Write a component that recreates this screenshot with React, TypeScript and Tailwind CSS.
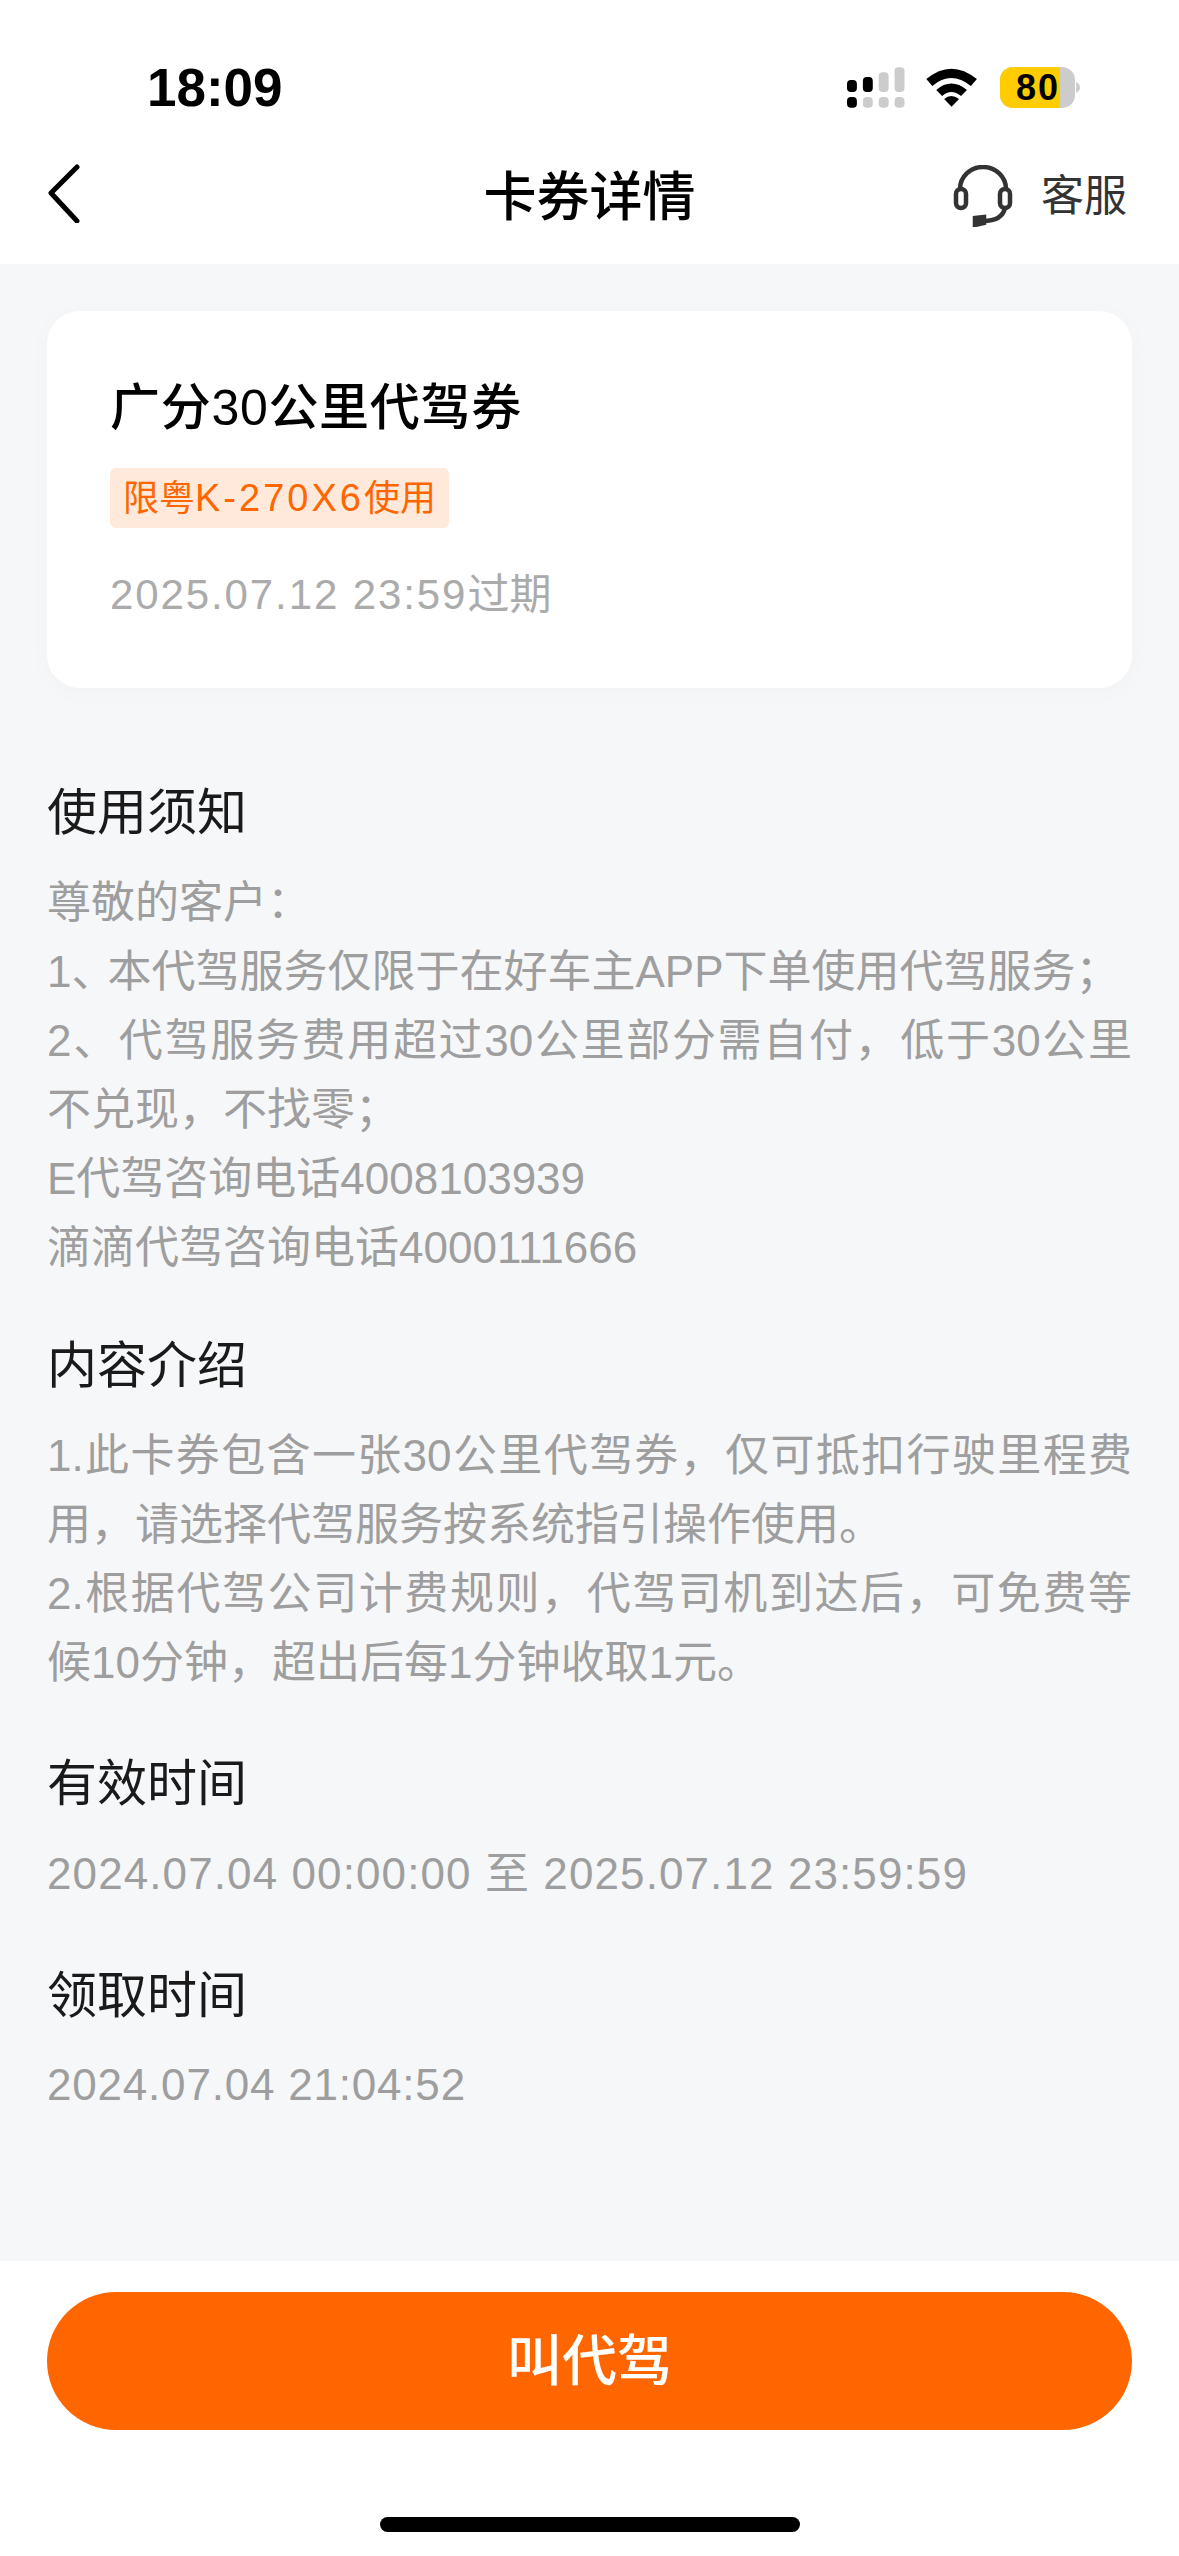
import React from "react";

const font = { fontFamily: '"Liberation Sans", "Noto Sans CJK SC", sans-serif' };

function Section({
  title,
  lines,
  className = "",
  bodyClass = "mt-5",
}: {
  title: string;
  lines: React.ReactNode[];
  className?: string;
  bodyClass?: string;
}) {
  return (
    <section className={className}>
      <h2 className="text-[50px] leading-[70px] font-normal text-[#1a1a1a]">{title}</h2>
      <div className={`text-justify text-[44px] leading-[69px] text-[#9e9e9e] ${bodyClass}`}>
        {lines.map((l, i) => (
          <p key={i}>{l}</p>
        ))}
      </div>
    </section>
  );
}

function StatusIcons() {
  return (
    <svg width="236" height="42" viewBox="846 67 236 42">
      <rect x="846" y="80" width="10" height="12" rx="4" fill="#000" />
      <rect x="862" y="77" width="10" height="15" rx="4" fill="#000" />
      <rect x="878" y="72" width="10" height="20" rx="4" fill="#ccc" />
      <rect x="894" y="67" width="10" height="25" rx="4" fill="#ccc" />
      <rect x="846" y="97" width="10" height="11" rx="4" fill="#000" />
      <rect x="862" y="97" width="10" height="11" rx="4" fill="#ccc" />
      <rect x="878" y="97" width="10" height="11" rx="4" fill="#ccc" />
      <rect x="894" y="97" width="10" height="11" rx="4" fill="#ccc" />
      <path d="M926 79 Q951 58 977 79 L971 86 Q951 70 932 86 Z" fill="#000" />
      <path d="M936 90 Q951 77 967 90 L961 96 Q951 88 942 96 Z" fill="#000" />
      <path d="M944 99 Q951 93 959 99 L951.500 107 Z" fill="#000" />
      <path d="M1077 82 Q1081 84 1081 87.500 Q1081 91 1077 93 Z" fill="#ccc" />
    </svg>
  );
}

function Battery() {
  return (
    <div className="flex h-[41px] w-[75px] overflow-hidden rounded-[13px] bg-[#cccccc]">
      <div className="flex h-full w-[60px] items-center justify-end bg-[#ffcc00] text-[36px] font-bold leading-none tracking-[2px] text-black">
        80
      </div>
    </div>
  );
}

function Headset() {
  return (
    <svg width="60" height="62" viewBox="0 0 60 62" fill="none" stroke="#333" strokeWidth="4.500">
      <path d="M7 26 V24 A23 22 0 0 1 53 24 V26" />
      <rect x="3" y="24" width="10" height="19" rx="5" />
      <rect x="47" y="24" width="10" height="19" rx="5" />
      <path d="M52 43 C50 52 42 56 30 56" />
      <path d="M22 53 L31 52 L31 58 L22 60 Z" fill="#333" />
    </svg>
  );
}

export default function App() {
  return (
    <div style={font} className="flex h-[2556px] w-[1179px] flex-col overflow-hidden bg-[#f6f7f9]">
      <header className="h-[264px] bg-white">
        <div className="flex h-[130px] items-start justify-between pl-[147px] pr-[98px] pt-[60px]">
          <span className="text-[53px] font-bold leading-[56px] text-black">18:09</span>
          <div className="relative mt-[7px] flex w-[234px] items-start">
            <StatusIcons />
            <div className="absolute left-[153px] top-0">
              <Battery />
            </div>
          </div>
        </div>
        <div className="grid h-[134px] grid-cols-[1fr_auto_1fr] items-start px-[47px] pt-[35px]">
          <svg className="-mt-[2px]" width="34" height="60" viewBox="0 0 34 60" fill="none" stroke="#000" strokeWidth="5" strokeLinecap="round" strokeLinejoin="round">
            <path d="M30 4 L4 30 L30 58" />
          </svg>
          <h1 className="text-[53px] font-medium leading-[66px] text-black">卡券详情</h1>
          <div className="flex items-center justify-end gap-[28px] pr-[5px]">
            <Headset />
            <span className="text-[43px] leading-[60px] text-[#333]">客服</span>
          </div>
        </div>
      </header>
      <main className="flex-1 px-[47px] pt-[47px]">
        <div className="h-[377px] rounded-[33px] bg-white pl-[63px] pt-[67px] shadow-[0_4px_24px_rgba(0,0,0,0.025)]">
          <div className="text-[50px] font-medium leading-[60px] tracking-[0.7px] text-black">广分30公里代驾券</div>
          <div className="mt-[30px] inline-block h-[60px] rounded-[6px] bg-[#ffe9db] px-[13px] text-[36px] leading-[60px] text-[#ff6600]">
            限粤<span className="text-[38px] tracking-[3px]">K-270X6</span>使用
          </div>
          <div className="mt-[37px] text-[42px] leading-[60px] tracking-[1.9px] text-[#ababab]">
            2025.07.12 23:59<span className="tracking-normal">过期</span>
          </div>
        </div>
        <Section
          className="mt-[90px]"
          title="使用须知"
          lines={[
            "尊敬的客户：",
            <>
              1<span className="tracking-[-8px]">、</span>本代驾服务仅限于在好车主APP下单使用代驾服务；
            </>,
            "2、代驾服务费用超过30公里部分需自付，低于30公里不兑现，不找零；",
            "E代驾咨询电话4008103939",
            "滴滴代驾咨询电话4000111666",
          ]}
        />
        <Section
          className="mt-[49px]"
          title="内容介绍"
          lines={[
            "1.此卡券包含一张30公里代驾券，仅可抵扣行驶里程费用，请选择代驾服务按系统指引操作使用。",
            "2.根据代驾公司计费规则，代驾司机到达后，可免费等候10分钟，超出后每1分钟收取1元。",
          ]}
        />
        <Section className="mt-[52px]" bodyClass="mt-5 tracking-[1.1px]" title="有效时间" lines={["2024.07.04 00:00:00 至 2025.07.12 23:59:59"]} />
        <Section className="mt-[53px]" bodyClass="mt-[19px] tracking-[0.8px]" title="领取时间" lines={["2024.07.04 21:04:52"]} />
      </main>
      <footer className="flex h-[295px] flex-col items-center bg-white px-[47px] pt-[31px]">
        <button className="h-[138px] w-full rounded-full bg-[#ff6600] text-[55px] font-medium text-white">叫代驾</button>
        <div className="mt-[87px] h-[15px] w-[420px] rounded-full bg-black" />
      </footer>
    </div>
  );
}
